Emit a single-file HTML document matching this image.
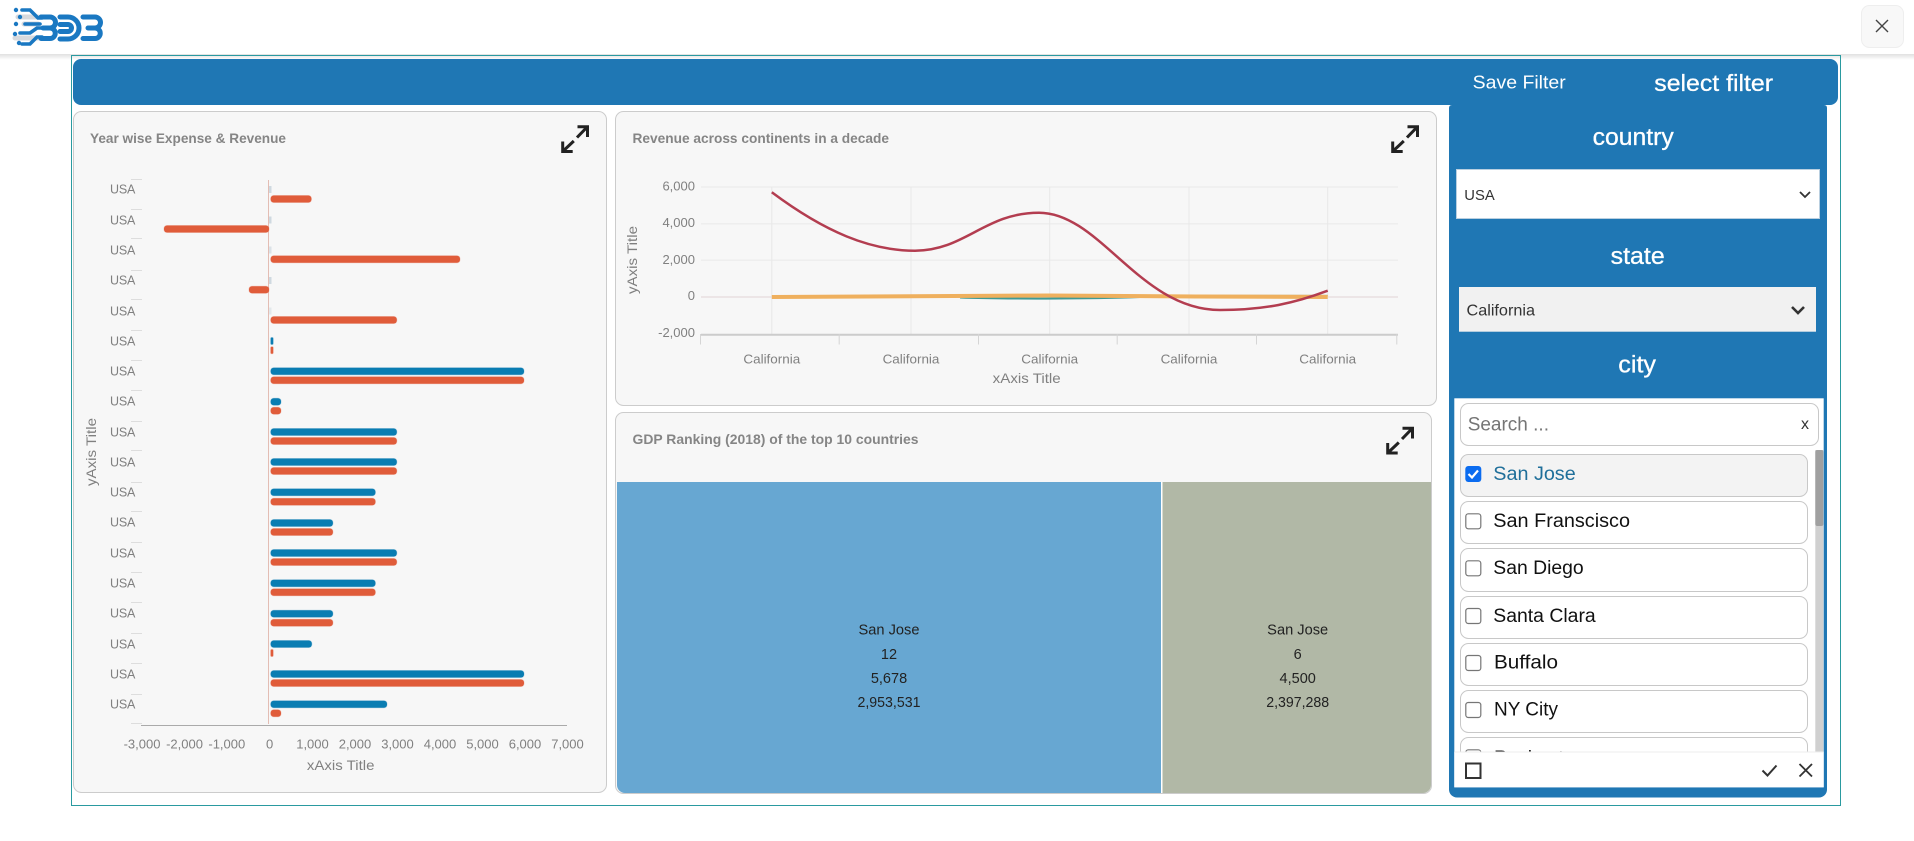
<!DOCTYPE html>
<html lang="en">
<head>
<meta charset="utf-8">
<title>Dashboard</title>
<style>
html,body{margin:0;padding:0;background:#fff;width:1914px;height:841px;overflow:hidden}
svg{display:block;position:absolute;left:0;top:0}
text{font-family:"Liberation Sans",sans-serif}
.t{font-size:14px;font-weight:700;fill:#858585}
.u{font-size:12.5px;fill:#808080}
.a{font-size:13px;fill:#808080}
.h{font-size:14px;fill:#808080}
.m{font-size:14.5px;fill:#222}
.w{fill:#fff;font-size:24px;stroke:#fff;stroke-width:.3}
.i{font-size:19px;fill:#111}
.ex{fill:none;stroke:#222;stroke-width:3}
.or{fill:#e05c3a;stroke:#e05c3a;stroke-opacity:.25}
.bl{fill:#0a7db2;stroke:#0a7db2;stroke-opacity:.25}
.gh{fill:#cfd9e0}
.tk{stroke:#ddd;stroke-width:1}
.row{fill:#fff;stroke:#c8c8c8;stroke-width:1}
.cb{fill:#fff;stroke:#767676;stroke-width:1.2}
</style>
</head>
<body>
<svg width="1914" height="841" viewBox="0 0 1914 841" xmlns="http://www.w3.org/2000/svg">
<defs>
<linearGradient id="sh" x1="0" y1="0" x2="0" y2="1"><stop offset="0" stop-color="#000" stop-opacity=".12"/><stop offset="1" stop-color="#000" stop-opacity="0"/></linearGradient>
<clipPath id="listclip"><rect x="1455" y="450" width="368" height="302"/></clipPath>
<clipPath id="tree"><path d="M617 482H1431V785a8 8 0 0 1-8 8H625a8 8 0 0 1-8-8Z"/></clipPath>
<g id="ex" class="ex"><path d="M577.5 126.7H587.5V137M587 127.2L577 137.5"/><path d="M572.7 151.5H562.700V141.500M563.200 151L573.800 141"/></g>
</defs>

<!-- top bar -->
<rect width="1914" height="54" fill="#fff"/>
<rect y="54" width="1914" height="6" fill="url(#sh)"/>
<rect x="71.500" y="55.500" width="1769" height="750" fill="none" stroke="#2a9aa0"/>

<!-- logo -->
<g fill="none" stroke-linecap="round">
<path d="M18 17H38M15 38H38M24 24H38" stroke="#d7d9dd" stroke-width="5"/>
<g stroke="#1a78c2" stroke-width="5">
<path d="M41 17H50a5.500 5.500 0 0 1 0 11H43M43 28H50a5.200 5.200 0 0 1 0 10.500H41"/>
<path d="M60 17H68a11 11 0 0 1 0 22H60M60 24.500H68a3.500 3.500 0 0 1 0 7H60"/>
<path d="M83 17H95a5.500 5.500 0 0 1 0 11H88M88 28H95a5.200 5.200 0 0 1 0 10.500H83"/>
</g>
<g stroke="#1a78c2" stroke-width="3.600">
<path d="M22 10H30L38 18H42M25 24H40M20 33H30L37 28H42M22 44H30L37 37H42"/>
</g>
</g>
<g fill="#1a78c2"><circle cx="16" cy="10" r="2.200"/><circle cx="20" cy="17" r="2.200"/><circle cx="16" cy="24" r="2.200"/><circle cx="15" cy="34" r="2.200"/><circle cx="19" cy="43" r="2.200"/></g>

<!-- close button -->
<rect x="1861.500" y="5.500" width="42" height="42" rx="8" fill="#f8f8f8" stroke="#eee"/>
<path d="M1876 20L1888 32M1888 20L1876 32" stroke="#444" stroke-width="1.400" fill="none"/>

<!-- blue bar -->
<rect x="73" y="59" width="1765" height="46" rx="8" fill="#1f77b4"/>
<text x="1472.700" y="88.500" font-size="18.500" fill="#fff" textLength="93" lengthAdjust="spacingAndGlyphs">Save Filter</text>
<text x="1654.300" y="91" class="w" style="font-size:23px" textLength="118.700" lengthAdjust="spacingAndGlyphs">select filter</text>

<!-- left card -->
<rect x="73.500" y="111.500" width="533" height="681" rx="8" fill="#f7f7f7" stroke="#ccc"/>
<text x="90" y="143" class="t" textLength="196" lengthAdjust="spacingAndGlyphs">Year wise Expense &amp; Revenue</text>
<use href="#ex"/>

<!-- left y-axis ticks -->
<g class="tk">
<path d="M131 179.500H142M131 209.500H142M131 238.500H142M131 270.500H142M131 299.500H142M131 330.500H142M131 360.500H142M131 390.500H142M131 421.500H142M131 450.500H142M131 482.500H142M131 511.500H142M131 542.500H142M131 572.500H142M131 602.500H142M131 633.500H142M131 663.500H142M131 694.500H142M131 723.500H142"/>
</g>
<path d="M268.500 180V724" stroke="#e3bdb4" stroke-width="1"/>
<path d="M141 725.500H567" stroke="#aaa" stroke-width="1"/>

<!-- ghost bars -->
<rect x="269" y="186" width="2.500" height="7" class="gh"/>
<rect x="269" y="216.500" width="2.500" height="7" class="gh"/>
<rect x="269" y="246.500" width="2.500" height="7" class="gh" opacity=".7"/>
<rect x="269" y="277" width="2.500" height="7" class="gh"/>
<rect x="269" y="307.500" width="2.500" height="7" class="gh" opacity=".5"/>

<!-- orange bars -->
<g class="or">
<rect x="270.700" y="195.500" width="40.700" height="7" rx="3"/>
<rect x="164" y="225.500" width="105" height="7" rx="3"/>
<rect x="270.700" y="255.800" width="189.300" height="7" rx="3"/>
<rect x="249" y="286.200" width="20" height="7" rx="3"/>
<rect x="270.700" y="316.500" width="126.100" height="7" rx="3"/>
<rect x="270.700" y="346.800" width="2.500" height="7" rx="1"/>
<rect x="270.700" y="376.800" width="253.300" height="7" rx="3"/>
<rect x="270.700" y="407.200" width="10.300" height="7" rx="3"/>
<rect x="270.700" y="437.500" width="126.100" height="7" rx="3"/>
<rect x="270.700" y="467.500" width="126.100" height="7" rx="3"/>
<rect x="270.700" y="498.200" width="104.700" height="7" rx="3"/>
<rect x="270.700" y="528.500" width="62.200" height="7" rx="3"/>
<rect x="270.700" y="558.500" width="126.100" height="7" rx="3"/>
<rect x="270.700" y="588.800" width="104.700" height="7" rx="3"/>
<rect x="270.700" y="619.200" width="62.200" height="7" rx="3"/>
<rect x="270.700" y="649.500" width="2.500" height="7" rx="1"/>
<rect x="270.700" y="679.500" width="253.300" height="7" rx="3"/>
<rect x="270.700" y="709.800" width="10.300" height="7" rx="3"/>
</g>
<!-- blue bars -->
<g class="bl">
<rect x="270.700" y="337.500" width="2.500" height="7" rx="1"/>
<rect x="270.700" y="367.800" width="253.300" height="7" rx="3"/>
<rect x="270.700" y="398.200" width="10.300" height="7" rx="3"/>
<rect x="270.700" y="428.500" width="126.100" height="7" rx="3"/>
<rect x="270.700" y="458.500" width="126.100" height="7" rx="3"/>
<rect x="270.700" y="488.800" width="104.700" height="7" rx="3"/>
<rect x="270.700" y="519.500" width="62.200" height="7" rx="3"/>
<rect x="270.700" y="549.500" width="126.100" height="7" rx="3"/>
<rect x="270.700" y="579.800" width="104.700" height="7" rx="3"/>
<rect x="270.700" y="610.200" width="62.200" height="7" rx="3"/>
<rect x="270.700" y="640.500" width="41.100" height="7" rx="3"/>
<rect x="270.700" y="670.500" width="253.300" height="7" rx="3"/>
<rect x="270.700" y="700.800" width="116.300" height="7" rx="3"/>
</g>

<!-- USA labels -->
<g class="u">
<text x="110" y="193.700" textLength="25.400">USA</text>
<text x="110" y="224.700" textLength="25.400">USA</text>
<text x="110" y="254.700" textLength="25.400">USA</text>
<text x="110" y="284.700" textLength="25.400">USA</text>
<text x="110" y="315.700" textLength="25.400">USA</text>
<text x="110" y="345.700" textLength="25.400">USA</text>
<text x="110" y="375.700" textLength="25.400">USA</text>
<text x="110" y="405.700" textLength="25.400">USA</text>
<text x="110" y="436.700" textLength="25.400">USA</text>
<text x="110" y="466.700" textLength="25.400">USA</text>
<text x="110" y="496.300" textLength="25.400">USA</text>
<text x="110" y="526.700" textLength="25.400">USA</text>
<text x="110" y="557.300" textLength="25.400">USA</text>
<text x="110" y="587.300" textLength="25.400">USA</text>
<text x="110" y="617.700" textLength="25.400">USA</text>
<text x="110" y="648.300" textLength="25.400">USA</text>
<text x="110" y="678.300" textLength="25.400">USA</text>
<text x="110" y="708.300" textLength="25.400">USA</text>
</g>
<!-- x labels -->
<g class="a" text-anchor="middle">
<text x="142" y="748.700">-3,000</text>
<text x="184.500" y="748.700">-2,000</text>
<text x="226.800" y="748.700">-1,000</text>
<text x="269.600" y="748.700">0</text>
<text x="312.500" y="748.700">1,000</text>
<text x="355" y="748.700">2,000</text>
<text x="397.500" y="748.700">3,000</text>
<text x="440" y="748.700">4,000</text>
<text x="482.500" y="748.700">5,000</text>
<text x="525" y="748.700">6,000</text>
<text x="567.500" y="748.700">7,000</text>
</g>
<text x="340.700" y="770" class="h" text-anchor="middle" textLength="67.500" lengthAdjust="spacingAndGlyphs">xAxis Title</text>
<text transform="translate(96 452) rotate(-90)" class="h" text-anchor="middle" textLength="68" lengthAdjust="spacingAndGlyphs">yAxis Title</text>

<!-- middle card -->
<rect x="615.500" y="111.500" width="821" height="294" rx="8" fill="#f7f7f7" stroke="#ccc"/>
<text x="632.500" y="143" class="t" textLength="256.500" lengthAdjust="spacingAndGlyphs">Revenue across continents in a decade</text>
<use href="#ex" transform="translate(830 0)"/>
<g stroke="#eeeeee" stroke-width="1.500" fill="none">
<path d="M701 187H1398M701 223.700H1398M701 260.300H1398"/>
</g>
<path d="M701 297H1398" stroke="#e9dfe0" stroke-width="1.500"/>
<g stroke="#e8e8e8" stroke-width="1">
<path d="M771.800 187V334M911 187V334M1049.700 187V334M1189 187V334M1327.700 187V334"/>
</g>
<path d="M701 334.700H1398" stroke="#ccc" stroke-width="2"/>
<g stroke="#d5d5d5" stroke-width="1"><path d="M700.500 334V344.500M839.200 334V344.500M978.500 334V344.500M1117.200 334V344.500M1256.500 334V344.500M1396.800 334V344.500"/></g>
<path d="M960 297.500C1000 299 1090 299 1140 297" stroke="#3f9a95" stroke-width="2" fill="none"/>
<path d="M1150 295.500H1327.700" stroke="#b7ad7c" stroke-width="1.500" fill="none"/>
<path d="M771.800 297C900 296.700 980 295.500 1050 295.500C1120 296 1250 297 1327.700 297" stroke="#efb05e" stroke-width="4" fill="none"/>
<path d="M771.800 192.300C825 232 870 250.700 915 250.700C965 250.700 985 212.700 1039 212.700C1100 212.700 1140 310 1220 310C1265 310 1295 303 1327.700 290.700" stroke="#b33d50" stroke-width="2.500" fill="none"/>
<g class="a" text-anchor="end">
<text x="695" y="190.300">6,000</text>
<text x="695" y="226.800">4,000</text>
<text x="695" y="263.800">2,000</text>
<text x="695" y="299.800">0</text>
<text x="695" y="337">-2,000</text>
</g>
<g class="a" text-anchor="middle">
<text x="771.800" y="363.500" textLength="56.800" lengthAdjust="spacingAndGlyphs">California</text>
<text x="911" y="363.500" textLength="56.800" lengthAdjust="spacingAndGlyphs">California</text>
<text x="1049.700" y="363.500" textLength="56.800" lengthAdjust="spacingAndGlyphs">California</text>
<text x="1189" y="363.500" textLength="56.800" lengthAdjust="spacingAndGlyphs">California</text>
<text x="1327.700" y="363.500" textLength="56.800" lengthAdjust="spacingAndGlyphs">California</text>
</g>
<text x="1026.700" y="383" class="h" text-anchor="middle" textLength="68" lengthAdjust="spacingAndGlyphs">xAxis Title</text>
<text transform="translate(637 260) rotate(-90)" class="h" text-anchor="middle" textLength="68" lengthAdjust="spacingAndGlyphs">yAxis Title</text>

<!-- bottom card -->
<rect x="615.500" y="412.500" width="816" height="381" rx="8" fill="#f7f7f7" stroke="#ccc"/>
<text x="632.500" y="443.800" class="t" textLength="286" lengthAdjust="spacingAndGlyphs">GDP Ranking (2018) of the top 10 countries</text>
<use href="#ex" transform="translate(825 301.500)"/>
<g clip-path="url(#tree)">
<rect x="617" y="482" width="544" height="311" fill="#67a7d2"/>
<rect x="1161" y="482" width="1.500" height="311" fill="#fff"/>
<rect x="1162.500" y="482" width="269" height="311" fill="#b1b8a6"/>
</g>
<g class="m" text-anchor="middle">
<text x="889" y="634.700" textLength="61" lengthAdjust="spacingAndGlyphs">San Jose</text>
<text x="889" y="659">12</text>
<text x="889" y="683">5,678</text>
<text x="889" y="707" textLength="63" lengthAdjust="spacingAndGlyphs">2,953,531</text>
<text x="1297.700" y="634.700" textLength="61" lengthAdjust="spacingAndGlyphs">San Jose</text>
<text x="1297.700" y="659">6</text>
<text x="1297.700" y="683">4,500</text>
<text x="1297.700" y="707" textLength="63" lengthAdjust="spacingAndGlyphs">2,397,288</text>
</g>

<!-- filter panel -->
<path d="M1449 108q0-3 3-3H1824q3 0 3 3V789.500a8 8 0 0 1-8 8H1457a8 8 0 0 1-8-8Z" fill="#1f77b4"/>
<text x="1592.700" y="145" class="w" textLength="81" lengthAdjust="spacingAndGlyphs">country</text>
<rect x="1456.500" y="169.500" width="363" height="49" fill="#fff" stroke="#b9cfe0"/>
<text x="1464.300" y="200" font-size="15" fill="#333" textLength="30.400" lengthAdjust="spacingAndGlyphs">USA</text>
<path d="M1800 192L1805 197L1810 192" fill="none" stroke="#333" stroke-width="1.800"/>
<text x="1610.700" y="264" class="w" textLength="54" lengthAdjust="spacingAndGlyphs">state</text>
<rect x="1459" y="287" width="357" height="44.700" fill="#f1f1f1"/>
<text x="1466.500" y="315.300" font-size="16" fill="#333" textLength="68.500" lengthAdjust="spacingAndGlyphs">California</text>
<path d="M1792 307L1798 313L1804 307" fill="none" stroke="#333" stroke-width="2.600"/>
<text x="1618.300" y="372.700" class="w" textLength="37.700" lengthAdjust="spacingAndGlyphs">city</text>

<!-- multiselect -->
<rect x="1454.300" y="398.300" width="369.400" height="389" fill="#fff"/>
<rect x="1460.500" y="403.500" width="358" height="42" rx="8" fill="#fff" stroke="#c8c8c8"/>
<text x="1467.700" y="430.700" font-size="19" fill="#757575" textLength="81.300" lengthAdjust="spacingAndGlyphs">Search ...</text>
<text x="1805" y="429" font-size="16" fill="#333" text-anchor="middle">x</text>

<g clip-path="url(#listclip)">
<rect x="1460.500" y="454.500" width="347" height="42" rx="8" fill="#f3f3f3" stroke="#c8c8c8"/>
<rect x="1460.500" y="501.500" width="347" height="42" rx="8" class="row"/>
<rect x="1460.500" y="548.500" width="347" height="43" rx="8" class="row"/>
<rect x="1460.500" y="596.500" width="347" height="42" rx="8" class="row"/>
<rect x="1460.500" y="643.500" width="347" height="42" rx="8" class="row"/>
<rect x="1460.500" y="690.500" width="347" height="42" rx="8" class="row"/>
<rect x="1460.500" y="737.500" width="347" height="42" rx="8" class="row"/>
<rect x="1465.300" y="466" width="16" height="16" rx="3" fill="#0b6cf0"/>
<path d="M1468.500 474L1472 477.500L1478 470.500" fill="none" stroke="#fff" stroke-width="2.200"/>
<rect x="1465.800" y="513.800" width="15" height="15" rx="2.500" class="cb"/>
<rect x="1465.800" y="560.800" width="15" height="15" rx="2.500" class="cb"/>
<rect x="1465.800" y="608.500" width="15" height="15" rx="2.500" class="cb"/>
<rect x="1465.800" y="655.500" width="15" height="15" rx="2.500" class="cb"/>
<rect x="1465.800" y="702.500" width="15" height="15" rx="2.500" class="cb"/>
<rect x="1465.800" y="749.800" width="15" height="15" rx="2.500" class="cb"/>
<text x="1493.300" y="480" class="i" style="fill:#1f6f9a" textLength="82.400" lengthAdjust="spacingAndGlyphs">San Jose</text>
<text x="1493.300" y="527" class="i" textLength="136.700" lengthAdjust="spacingAndGlyphs">San Franscisco</text>
<text x="1493.300" y="574" class="i" textLength="90.400" lengthAdjust="spacingAndGlyphs">San Diego</text>
<text x="1493.300" y="622" class="i" textLength="102.400" lengthAdjust="spacingAndGlyphs">Santa Clara</text>
<text x="1494" y="668.700" class="i" textLength="64" lengthAdjust="spacingAndGlyphs">Buffalo</text>
<text x="1494" y="715.700" class="i" textLength="64" lengthAdjust="spacingAndGlyphs">NY City</text>
<text x="1494" y="764" class="i">Rochester</text>
</g>
<rect x="1815.300" y="450" width="8" height="301.700" fill="#d0d0d0"/>
<rect x="1815.300" y="450" width="8" height="76" rx="2" fill="#a0a0a0"/>
<rect x="1454.300" y="752" width="369.400" height="35.300" fill="#fff"/>
<path d="M1454.300 752H1823.700" stroke="#eee"/>
<rect x="1466" y="763.500" width="14.500" height="14.500" fill="none" stroke="#333" stroke-width="2"/>
<path d="M1762.500 770.500L1767.500 775.500L1776.500 765.500" fill="none" stroke="#333" stroke-width="2"/>
<path d="M1799.500 764L1812 776.500M1812 764L1799.500 776.500" fill="none" stroke="#333" stroke-width="1.800"/>
</svg>
</body>
</html>
